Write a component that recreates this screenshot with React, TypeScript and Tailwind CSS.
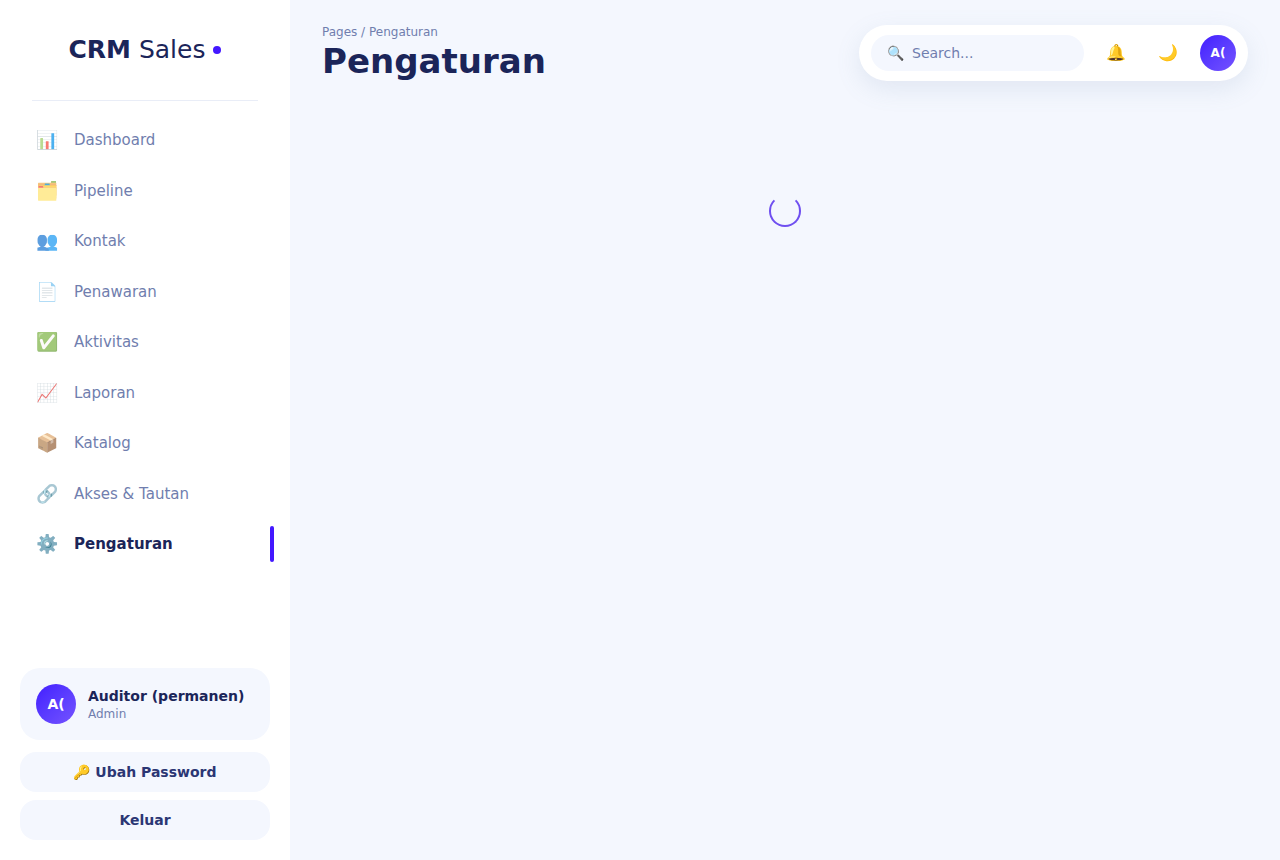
import { useState } from "react";

const NAV_ITEMS = [
  { icon: "📊", label: "Dashboard" },
  { icon: "🗂️", label: "Pipeline" },
  { icon: "👥", label: "Kontak" },
  { icon: "📄", label: "Penawaran" },
  { icon: "✅", label: "Aktivitas" },
  { icon: "📈", label: "Laporan" },
  { icon: "📦", label: "Katalog" },
  { icon: "🔗", label: "Akses & Tautan" },
  { icon: "⚙️", label: "Pengaturan" },
];

function Avatar({ className }: { className: string }) {
  return (
    <span
      className={`flex shrink-0 items-center justify-center rounded-full bg-linear-135 from-[#4318ff] to-[#7551ff] font-bold text-white ${className}`}
    >
      A(
    </span>
  );
}

function Sidebar({ active }: { active: string }) {
  return (
    <aside className="flex w-[290px] shrink-0 flex-col bg-white">
      <div className="mx-8 flex h-[101px] items-center justify-center gap-2 border-b border-[#e9edf7] text-[25px] text-[#1b2559]">
        <span>
          <b className="font-bold">CRM</b> Sales
        </span>
        <span className="size-2 rounded-full bg-[#4318ff]" />
      </div>
      <nav className="flex flex-1 flex-col gap-1 px-4 pt-4">
        {NAV_ITEMS.map(({ icon, label }) => (
          <a
            key={label}
            href="#"
            aria-current={label === active ? "page" : undefined}
            className={
              label === active
                ? "flex items-center gap-4 px-5 py-3 text-[15px] leading-normal font-bold text-[#1b2559]"
                : "flex items-center gap-4 px-5 py-3 text-[15px] leading-normal text-[#707eae]"
            }
          >
            <span
              className={
                label === active
                  ? "w-[22px] text-center text-lg leading-none font-normal"
                  : "w-[22px] text-center text-lg leading-none font-normal opacity-70"
              }
            >
              {icon}
            </span>
            <span className="flex-1">{label}</span>
            {label === active && (
              <span className="-my-2 -mr-5 h-9 w-1 rounded-sm bg-[#4318ff]" />
            )}
          </a>
        ))}
      </nav>
      <div className="flex flex-col gap-2 p-5">
        <div className="mb-1 flex items-center gap-3 rounded-[20px] bg-[#f4f7fe] p-4">
          <Avatar className="size-10 text-sm" />
          <div>
            <p className="text-sm font-bold text-[#1b2559]">
              Auditor (permanen)
            </p>
            <p className="text-xs text-[#707eae]">Admin</p>
          </div>
        </div>
        <button
          type="button"
          className="h-10 rounded-2xl bg-[#f4f7fe] text-sm font-bold text-[#2b3674]"
        >
          🔑 Ubah Password
        </button>
        <button
          type="button"
          className="h-10 rounded-2xl bg-[#f4f7fe] text-sm font-bold text-[#2b3674]"
        >
          Keluar
        </button>
      </div>
    </aside>
  );
}

export default function App() {
  const [search, setSearch] = useState("");

  return (
    <div className="flex min-h-screen bg-[#f4f7fe] font-['DejaVu_Sans',sans-serif]">
      <Sidebar active="Pengaturan" />
      <main className="flex-1 px-8 pt-6">
        <header className="flex items-center justify-between">
          <div>
            <p className="text-xs text-[#707eae]">Pages / Pengaturan</p>
            <h1 className="text-[34px] leading-[42px] font-bold text-[#1b2559]">
              Pengaturan
            </h1>
          </div>
          <div className="flex items-center gap-3 rounded-full bg-white px-3 py-[10px] shadow-[0_8px_24px_rgba(112,144,176,0.15)]">
            <label className="flex h-9 w-[213px] items-center gap-2 rounded-full bg-[#f4f7fe] px-4 text-sm text-[#707eae]">
              <span>🔍</span>
              <input
                type="text"
                aria-label="Search"
                placeholder="Search..."
                value={search}
                onChange={(e) => setSearch(e.target.value)}
                className="w-full min-w-0 bg-transparent outline-none placeholder:text-[#707eae]"
              />
            </label>
            <button
              type="button"
              aria-label="Notifikasi"
              className="h-9 w-10 text-base"
            >
              🔔
            </button>
            <button
              type="button"
              aria-label="Mode gelap"
              className="h-9 w-10 text-base"
            >
              🌙
            </button>
            <Avatar className="size-9 text-xs" />
          </div>
        </header>
        <div className="flex justify-center pt-[113px]">
          <div
            role="status"
            aria-label="Memuat"
            className="size-8 rounded-full border-2 border-[#6f4ff0] border-t-transparent"
          />
        </div>
      </main>
    </div>
  );
}
